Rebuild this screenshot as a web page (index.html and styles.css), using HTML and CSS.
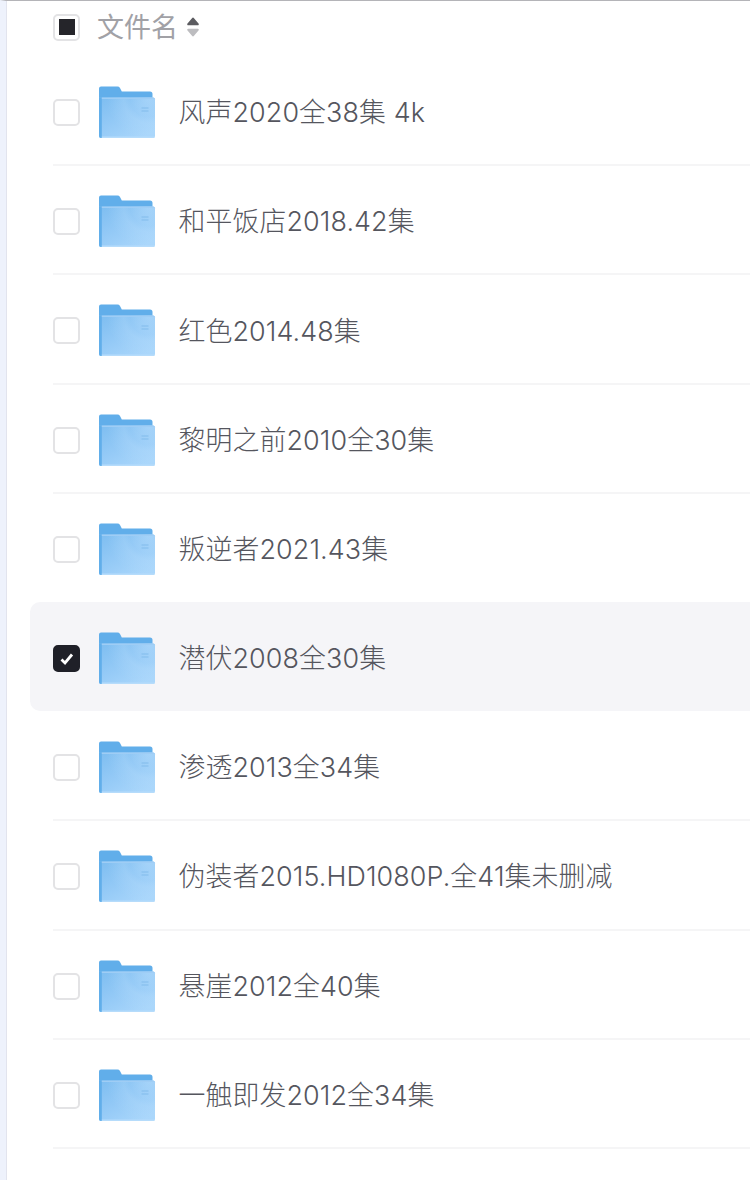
FILE: index.html
```html
<!DOCTYPE html>
<html lang="zh-CN">
<head>
<meta charset="utf-8">
<title>文件列表</title>
<link rel="stylesheet" href="styles.css">
</head>
<body>
<svg class="defs" width="0" height="0" aria-hidden="true">
  <defs>
    <linearGradient id="fold" x1="0" y1="0" x2="0.75" y2="1">
      <stop offset="0" stop-color="#7dbdf0"/>
      <stop offset="0.5" stop-color="#93c9f6"/>
      <stop offset="1" stop-color="#a9d6fb"/>
    </linearGradient>
    <radialGradient id="glow" gradientUnits="userSpaceOnUse" cx="50" cy="12" r="42">
      <stop offset="0" stop-color="#b9defc" stop-opacity=".5"/>
      <stop offset="0.45" stop-color="#b9defc" stop-opacity=".12"/>
      <stop offset="0.6" stop-color="#b9defc" stop-opacity=".28"/>
      <stop offset="1" stop-color="#b9defc" stop-opacity="0"/>
    </radialGradient>
    <symbol id="folder" viewBox="0 0 57 53">
      <path d="M0 2.500A2 2 0 0 1 2 .500h16.500a3 3 0 0 1 2.500 1.400l1.800 3.600H51a2.500 2.500 0 0 1 2.500 2.500V14H0z" fill="#61aeea"/>
      <path d="M0 11.500h54a2 2 0 0 1 2 2V50a2 2 0 0 1-2 2H2a2 2 0 0 1-2-2z" fill="url(#fold)"/>
      <path d="M0 11.500h54a2 2 0 0 1 2 2V50a2 2 0 0 1-2 2H2a2 2 0 0 1-2-2z" fill="url(#glow)"/>
      <path d="M0 11.500V50a2 2 0 0 0 2 2h.800V11.500z" fill="#61aeea"/>
      <path d="M2.800 11.500H54a2 2 0 0 1 2 1.500H2.800z" fill="#9fcdf5"/>
      <path d="M2.800 50.500H56a2 2 0 0 1-2 1.500H2.800z" fill="#b6dcfb"/>
      <path d="M42.500 22h7M42.500 25h7" stroke="#82bbec" stroke-width="1.100"/>
    </symbol>
  </defs>
</svg>
<main class="page">
  <div class="head">
    <span class="box box-mixed"><i></i></span>
    <span class="head-label">文件名</span>
    <svg class="sort" width="12" height="20" viewBox="0 0 12 20"><path d="M5 1.200a1.300 1.300 0 0 1 2 0l4.500 5.300a1 1 0 0 1-.8 1.700H1.300a1 1 0 0 1-.8-1.700z" fill="#5c5c60"/><path d="M1.300 11.800h9.400a1 1 0 0 1 .8 1.700L7 18.800a1.300 1.300 0 0 1-2 0L.5 13.500a1 1 0 0 1 .8-1.700z" fill="#bdbdc0"/></svg>
  </div>
  <ul class="list">
    <li class="row"><span class="box"></span><svg class="folder"><use href="#folder"/></svg><span class="name">风声2020全38集 4k</span></li>
    <li class="row"><span class="box"></span><svg class="folder"><use href="#folder"/></svg><span class="name">和平饭店2018.42集</span></li>
    <li class="row"><span class="box"></span><svg class="folder"><use href="#folder"/></svg><span class="name">红色2014.48集</span></li>
    <li class="row"><span class="box"></span><svg class="folder"><use href="#folder"/></svg><span class="name">黎明之前2010全30集</span></li>
    <li class="row row-before"><span class="box"></span><svg class="folder"><use href="#folder"/></svg><span class="name">叛逆者2021.43集</span></li>
    <li class="row row-on"><span class="box box-on"><svg width="16" height="14" viewBox="0 0 16 14"><path d="M2.500 7.500l3.500 3.500 7-8.500" fill="none" stroke="#fff" stroke-width="2.800"/></svg></span><svg class="folder"><use href="#folder"/></svg><span class="name">潜伏2008全30集</span></li>
    <li class="row"><span class="box"></span><svg class="folder"><use href="#folder"/></svg><span class="name">渗透2013全34集</span></li>
    <li class="row"><span class="box"></span><svg class="folder"><use href="#folder"/></svg><span class="name">伪装者2015.HD1080P.全41集未删减</span></li>
    <li class="row"><span class="box"></span><svg class="folder"><use href="#folder"/></svg><span class="name">悬崖2012全40集</span></li>
    <li class="row"><span class="box"></span><svg class="folder"><use href="#folder"/></svg><span class="name">一触即发2012全34集</span></li>
  </ul>
</main>
</body>
</html>
```
FILE: styles.css
```css
* { box-sizing: border-box; }
html, body { margin: 0; height: 100%; background: #fff; }
body { overflow: hidden; font-family: "Inter", "Noto Sans CJK SC", sans-serif; }
.defs { display: block; height: 0; }
.page {
  height: 1180px;
  border-top: 1px solid #b4b4b8;
  border-left: 6px solid #eef2fc;
  padding-left: 47px;
  box-shadow: inset 1px 0 0 #e2e4ee;
}
.head { display: flex; align-items: center; height: 56px; padding-bottom: 4px; }
.head-label { margin-left: 17px; font-size: 27px; font-weight: 400; color: #a1a1a6; line-height: 1; }
.sort { margin-left: 9px; }
.box {
  display: flex; align-items: center; justify-content: center; flex: none;
  width: 27px; height: 27px;
  border: 2px solid #e3e3e5; border-radius: 5px; background: #fff;
}
.box-mixed i { display: block; width: 16px; height: 16px; background: #25252a; }
.box-on { background: #1f2028; border-color: #1f2028; }
.list { list-style: none; margin: 0; padding: 0; }
.row {
  display: flex; align-items: center;
  height: 109.200px;
  padding-top: 4px;
  border-bottom: 2px solid #f5f5f6;
}
.row-before { border-bottom-color: transparent; }
.row-on {
  margin: -1px 0 1px -23px; padding: 4px 0 0 23px;
  background: #f5f5f8; border-bottom: 0; border-radius: 10px 0 0 10px;
}
.folder { width: 57px; height: 53px; margin-left: 18.500px; flex: none; }
.name { margin-left: 23px; font-size: 26.900px; font-weight: 300; letter-spacing: .1px; line-height: 1; color: #55565e; white-space: nowrap; }
```
